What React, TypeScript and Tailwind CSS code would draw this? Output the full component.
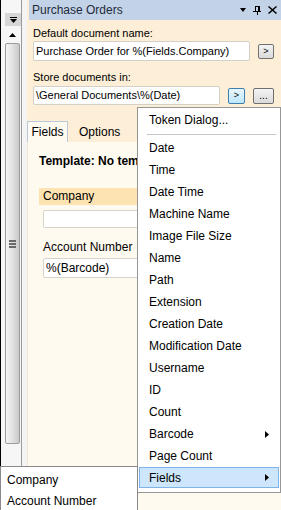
import React from "react";

const menuItems = [
  "Date",
  "Time",
  "Date Time",
  "Machine Name",
  "Image File Size",
  "Name",
  "Path",
  "Extension",
  "Creation Date",
  "Modification Date",
  "Username",
  "ID",
  "Count",
  "Barcode",
  "Page Count",
];

function Arrow() {
  return (
    <svg width="4" height="7" viewBox="0 0 4 7" className="block">
      <path d="M0 0 L4 3.5 L0 7 Z" fill="#000" />
    </svg>
  );
}

export default function App() {
  return (
    <div className="relative w-[281px] h-[510px] overflow-hidden flex bg-[#f0f0f0] font-['Liberation_Sans',Arial,sans-serif] text-black">
      {/* left scroll strip */}
      <div className="w-[27px] h-full flex shrink-0">
        <div className="w-px h-full bg-black" />
        <div className="w-[20px] h-full flex flex-col bg-[#f6f6f6]">
          <div className="h-[13px]" />
          <div className="ml-[4px] w-[16px] h-[13px] bg-[#d6d6d6] flex items-center justify-center">
            <svg width="7" height="6" viewBox="0 0 7 6">
              <rect x="0" y="0" width="7" height="1" fill="#000" />
              <path d="M0 2 L7 2 L3.5 6 Z" fill="#000" />
            </svg>
          </div>
          <div className="h-[7px]" />
          <div className="flex justify-center ml-[2px]">
            <svg width="7" height="4" viewBox="0 0 7 4">
              <path d="M0 4 L7 4 L3.5 0 Z" fill="#000" />
            </svg>
          </div>
          <div className="mt-[6px] ml-[4px] w-[15px] h-[401px] border border-[#9c9c9c] rounded-[2px] bg-gradient-to-r from-[#f4f4f4] via-[#e2e2e2] to-[#c8c8c8] flex items-center justify-center">
            <div className="flex flex-col gap-[1px]">
              <div className="w-[7px] h-[2px] bg-[#6a6a6a]" />
              <div className="w-[7px] h-[2px] bg-[#6a6a6a]" />
              <div className="w-[7px] h-[2px] bg-[#6a6a6a]" />
            </div>
          </div>
          <div className="flex-1" />
        </div>
        <div className="w-px h-full bg-[#9a9a9a]" />
        <div className="w-[5px] h-full bg-[#f4f4f4]" />
      </div>

      {/* panel */}
      <div className="flex-1 h-full flex flex-col bg-[#fdeed7]">
        <div className="h-[20px] ml-[2px] bg-[#c3d3e7] flex items-center pl-[3px] pr-[4px] text-[12px]">
          <span className="flex-1 text-[#1e2a3a]">Purchase Orders</span>
          <div className="flex items-center gap-[7px]">
            <svg width="6" height="4" viewBox="0 0 6 4">
              <path d="M0 0 L6 0 L3 4 Z" fill="#000" />
            </svg>
            <svg width="8" height="9" viewBox="0 0 8 9">
              <rect x="2" y="0" width="5" height="1" fill="#000" />
              <rect x="2" y="0" width="1" height="5" fill="#000" />
              <rect x="5" y="0" width="2" height="5" fill="#000" />
              <rect x="0" y="5" width="8" height="1" fill="#000" />
              <rect x="4" y="5" width="1" height="4" fill="#000" />
            </svg>
            <svg width="9" height="8" viewBox="0 0 9 8">
              <path d="M1 0 L4.5 3 L8 0 L9 1 L5.5 4 L9 7 L8 8 L4.5 5 L1 8 L0 7 L3.5 4 L0 1 Z" fill="#000" />
            </svg>
          </div>
        </div>

        <div className="pl-[6px] pr-[5px] text-[11px] leading-[13px]">
          <div className="mt-[7px]">Default document name:</div>
          <div className="mt-[1px] flex items-center">
            <div className="w-[217px] h-[20px] bg-white border border-[#d4d0c8] rounded-[2px] flex items-center pl-[2px] whitespace-nowrap overflow-hidden">
              Purchase Order for %(Fields.Company)
            </div>
            <div className="ml-[8px] w-[16px] h-[15px] border border-[#707070] rounded-[2px] bg-gradient-to-b from-[#f4f4f4] to-[#dadada] flex items-center justify-center text-[9px] leading-none">
              &gt;
            </div>
          </div>
          <div className="mt-[10px]">Store documents in:</div>
          <div className="mt-[2px] flex items-center">
            <div className="w-[187px] h-[19px] bg-white border border-[#d4d0c8] rounded-[2px] flex items-center pl-[2px] whitespace-nowrap overflow-hidden">
              \General Documents\%(Date)
            </div>
            <div className="ml-[8px] w-[17px] h-[16px] border border-[#3c7fb1] rounded-[2px] bg-gradient-to-b from-[#eaf6fd] to-[#bee6fd] flex items-center justify-center text-[9px] leading-none">
              &gt;
            </div>
            <div className="ml-[8px] w-[21px] h-[16px] border border-[#707070] rounded-[2px] bg-gradient-to-b from-[#f4f4f4] to-[#dadada] flex items-end justify-center pb-[2px] text-[10px] leading-none">
              ...
            </div>
          </div>
        </div>

        {/* tabs */}
        <div className="mt-[16px] flex items-end h-[21px] text-[12px]">
          <div className="h-[21px] w-[41px] bg-[#fffaf0] border border-b-0 border-[#b9c9da] flex items-center justify-center">
            Fields
          </div>
          <div className="h-[20px] pl-[11px] flex items-center">Options</div>
        </div>
        <div className="flex-1 bg-[#fffaf0] border-l border-[#f0e6d4] text-[11px] leading-[13px]">
          <div className="mt-[13px] ml-[11px] w-[98px] overflow-hidden font-bold text-[12px] whitespace-nowrap">Template: No template</div>
          <div className="mt-[20px] ml-[11px] h-[17px] bg-[#fde3b2] flex items-center pl-[4px] text-[12px]">Company</div>
          <div className="mt-[5px] ml-[15px] h-[18px] bg-white border border-[#d8d4cc] rounded-[2px]" />
          <div className="mt-[13px] ml-[15px] text-[12px]">Account Number</div>
          <div className="mt-[4px] ml-[15px] h-[20px] bg-white border border-[#d8d4cc] rounded-[2px] flex items-center pl-[2px] text-[12px]">
            %(Barcode)
          </div>
        </div>
      </div>

      {/* token context menu */}
      <div className="absolute left-[137px] top-[107px] w-[144px] h-[386px] bg-white border border-[#979797] text-[12px] p-[1px] flex flex-col">
        <div className="h-[22px] flex items-center pl-[10px]">Token Dialog...</div>
        <div className="h-[6px] flex items-center pl-[8px] pr-[3px]">
          <div className="w-full h-px bg-[#c5c5c5]" />
        </div>
        {menuItems.map((m) => (
          <div key={m} className="h-[22px] flex items-center pl-[10px] pr-[10px]">
            <span className="flex-1">{m}</span>
            {m === "Barcode" && <Arrow />}
          </div>
        ))}
        <div className="h-[21px] flex items-center pl-[9px] pr-[9px] bg-[#cde6fb] border border-[#7eb4ea]">
          <span className="flex-1">Fields</span>
          <Arrow />
        </div>
      </div>

      {/* fields popup */}
      <div className="absolute left-0 top-[466px] w-[138px] h-[46px] bg-white border border-[#8a8a8a] text-[12px] flex flex-col pt-[2px]">
        <div className="h-[21px] flex items-center pl-[6px]">Company</div>
        <div className="h-[21px] flex items-center pl-[6px]">Account Number</div>
      </div>
    </div>
  );
}
